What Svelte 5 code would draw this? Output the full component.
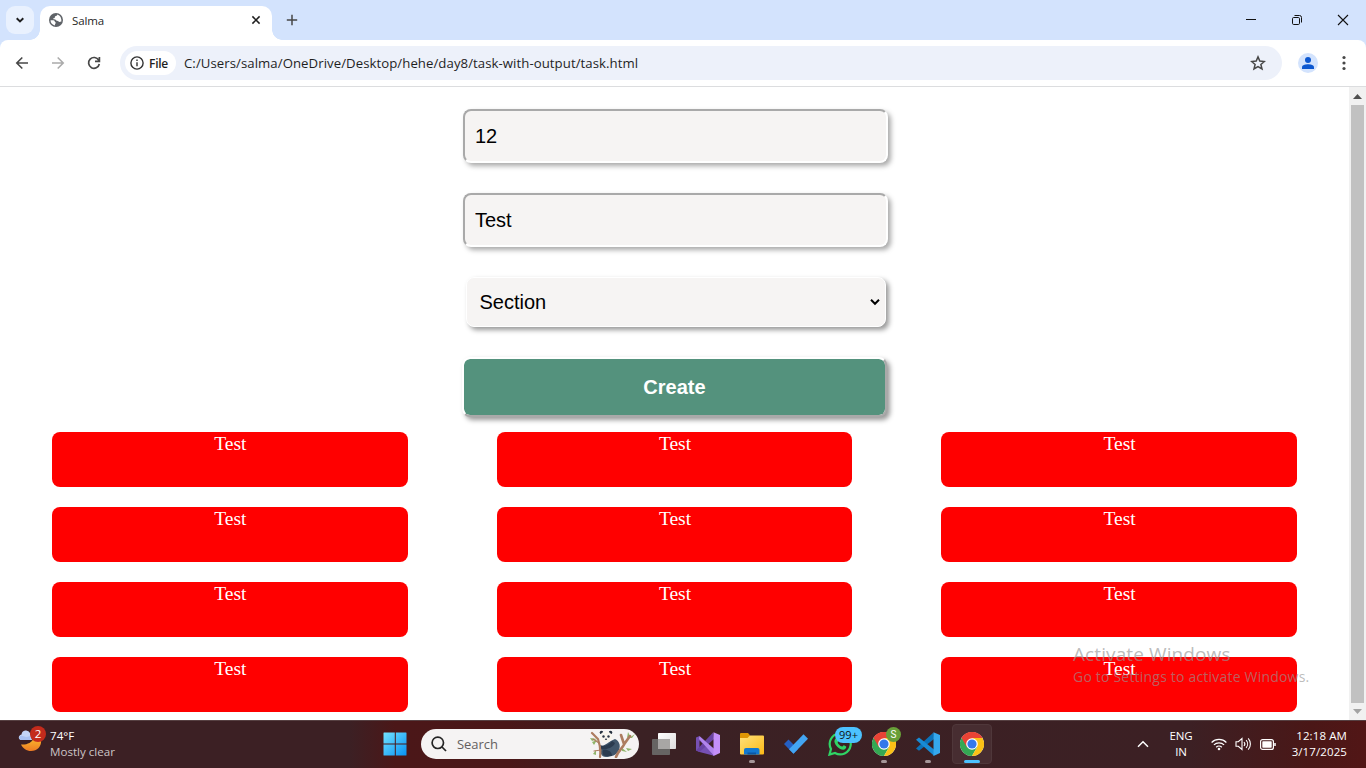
<script>
  const cards = Array.from({ length: 12 }, (_, i) => i);
</script>

{#snippet chrome()}
  <svg class="app-icon" viewBox="0 0 24 24">
    <circle cx="12" cy="12" r="12" fill="#fff" />
    <path d="M12 12 1.6 6A12 12 0 0 1 22.4 6Z" fill="#e94335" />
    <path d="M1.6 6A12 12 0 0 0 12 24L17.2 15 12 12Z" fill="#34a853" />
    <path d="M22.4 6A12 12 0 0 1 12 24L17.2 15 12 6Z" fill="#fbc116" />
    <path d="M12 6H22.4A12 12 0 0 0 1.6 6L6.8 15 12 12Z" fill="#e94335" />
    <circle cx="12" cy="12" r="5.8" fill="#fff" />
    <circle cx="12" cy="12" r="4.6" fill="#3478ea" />
  </svg>
{/snippet}

<div class="screen">
  <div class="tabs">
    <div class="tab-search">
      <svg width="10" height="8" viewBox="0 0 10 8"><path d="m1.7 2.2 3.3 3.2 3.3-3.2" fill="none" stroke="#1f1f1f" stroke-width="1.9" /></svg>
    </div>
    <div class="tab">
      <svg width="14" height="14" viewBox="0 0 14 14">
        <circle cx="7" cy="7" r="7" fill="#5f6368" />
        <path d="M8.300 1.500c0 1.200-1.200 1.300-2 1.700-.7.400-.1 1.200-.8 1.700-.6.400-1.300.2-1.300.9 0 .6.800.6 1.700.6 1.400 0 1.300 1.300 2.200 1.400 1 .1 1.500.7 2 1.200l2.300-.4C12.700 5.200 11.300 2.300 8.300 1.500ZM1.500 7.200h2.800c1.400 0 1.600 1.200 1.600 1.900 1.200.2 1 1.200.3 1.900-.4.400-.2.900-.1 1.400C3.500 12 1.500 10 1.500 7.200Z" fill="#fff" />
      </svg>
      <span class="tab-title">Salma</span>
      <svg width="10" height="10" viewBox="0 0 10 10"><path d="m1.400 1.400 7.200 7.200m0-7.200-7.200 7.200" stroke="#1f1f1f" stroke-width="1.500" /></svg>
    </div>
    <svg class="plus" width="12" height="12" viewBox="0 0 12 12"><path d="M6 .8v10.400M.8 6h10.400" stroke="#474747" stroke-width="1.500" /></svg>
    <div class="window-controls">
      <svg width="12" height="12" viewBox="0 0 12 12"><path d="M1 5.500h10" stroke="#111" /></svg>
      <svg width="12" height="12" viewBox="0 0 12 12" fill="none" stroke="#111"><rect x="1.500" y="3.500" width="7" height="7" rx="1.200" /><path d="M3.500 1.500h5a2 2 0 0 1 2 2v5" /></svg>
      <svg width="12" height="12" viewBox="0 0 12 12"><path d="m1 1 10 10m0-10L1 11" stroke="#111" stroke-width="1.100" /></svg>
    </div>
  </div>

  <div class="toolbar-wrap">
    <div class="toolbar">
      <svg width="14" height="14" viewBox="0 0 14 14" fill="none" stroke="#474747" stroke-width="1.600"><path d="M13 7H2m5.300-5.500L1.800 7l5.500 5.500" /></svg>
      <svg width="14" height="14" viewBox="0 0 14 14" fill="none" stroke="#ababab" stroke-width="1.600"><path d="M1 7h11M6.700 1.500 12.200 7l-5.500 5.500" /></svg>
      <svg width="14" height="14" viewBox="0 0 14 14" fill="none" stroke="#474747" stroke-width="1.700"><path d="M11.700 4.200A5.400 5.400 0 1 0 12.300 8M12.400 1v4.300H8" /></svg>
      <div class="omnibox">
        <div class="chip">
          <svg width="14" height="14" viewBox="0 0 14 14"><circle cx="7" cy="7" r="6.100" fill="none" stroke="#333" stroke-width="1.400" /><path d="M7 6.300v4M7 3.500v1.400" stroke="#333" stroke-width="1.400" /></svg>
          <span>File</span>
        </div>
        <span class="url">C:/Users/salma/OneDrive/Desktop/hehe/day8/task-with-output/task.html</span>
        <svg width="16" height="16" viewBox="0 0 16 16"><path d="m8 1.900 1.800 4.200 4.600.4-3.500 3 1.100 4.500L8 11.600 4 14l1.100-4.500-3.500-3 4.600-.4Z" fill="none" stroke="#474747" stroke-width="1.500" /></svg>
      </div>
      <div class="avatar">
        <svg width="14" height="14" viewBox="0 0 14 14" fill="#0b57d0"><circle cx="7" cy="4" r="3" /><path d="M1 13v-1.700C1 9 4.500 8.300 7 8.300s6 .7 6 3V13Z" /></svg>
      </div>
      <svg width="4" height="16" viewBox="0 0 4 16" fill="#474747"><circle cx="2" cy="2.500" r="1.600" /><circle cx="2" cy="8" r="1.600" /><circle cx="2" cy="13.500" r="1.600" /></svg>
    </div>
  </div>

  <div class="viewport">
    <main>
      <form>
        <input value="12" />
        <input value="Test" />
        <div class="select">
          <span>Section</span>
          <svg width="10" height="8" viewBox="0 0 10 8"><path d="m1 1.800 4 4 4-4" fill="none" stroke="#000" stroke-width="2" /></svg>
        </div>
        <button type="button">Create</button>
      </form>
      <div class="cards">
        {#each cards as card (card)}
          <section>Test</section>
        {/each}
      </div>
    </main>
    <div class="scrollbar">
      <svg width="9" height="5" viewBox="0 0 9 5"><path d="M0 5 4.500 0 9 5Z" fill="#505050" /></svg>
      <div class="thumb"></div>
      <svg width="9" height="5" viewBox="0 0 9 5"><path d="M0 0 4.500 5 9 0Z" fill="#a3a3a3" /></svg>
    </div>
  </div>

  <div class="taskbar">
    <div class="weather">
      <div class="weather-icon">
        <svg width="28" height="28" viewBox="0 0 28 28">
          <defs><linearGradient id="moon" x2="0" y2="1"><stop offset="0" stop-color="#fbb72c" /><stop offset="1" stop-color="#ee7b24" /></linearGradient></defs>
          <path d="M3 18.500c6 .5 11-2 12.500-6l7.500 1c1 7-4 11.500-10 11.500-4.500 0-8-2.500-10-6.500Z" fill="url(#moon)" />
          <path d="M1 12.500a3 3 0 0 1 2.500-4 4.500 4.500 0 0 1 8.500-1.500L14 14H2.500Z" fill="#c3d4f7" />
          <path d="M1 12a2.500 2.500 0 0 1 3.500-2l4 1 4-1v4H3Q1.500 14 1 12Z" fill="#a9c1f2" />
        </svg>
        <b>2</b>
      </div>
      <div class="weather-text"><span>74°F</span><span class="dim">Mostly clear</span></div>
    </div>

    <div class="apps">
      <svg class="start" width="24" height="24" viewBox="0 0 24 24">
        <defs><linearGradient id="win" x2="1" y2="1"><stop offset="0" stop-color="#73e3ff" /><stop offset="1" stop-color="#0791f3" /></linearGradient></defs>
        <path d="M1 .5h10.800v11H.5V1Q.5.500 1 .5ZM12.800.500H23q.5 0 .5.500v10.500H12.800ZM.500 12.500h11.300v11H1q-.5 0-.5-.5ZM12.800 12.500h10.700V23q0 .5-.5.500H12.800Z" fill="url(#win)" />
      </svg>
      <div class="search">
        <svg width="16" height="16" viewBox="0 0 16 16" fill="none" stroke="#252525" stroke-width="1.700"><circle cx="6.800" cy="6.800" r="5.700" /><path d="m11 11 4 4" /></svg>
        <span>Search</span>
        <svg class="panda" width="46" height="28" viewBox="0 0 46 28">
          <path d="m1 8 7 1-5 2ZM3 12l5-2-3 5ZM4 24l3-4v5ZM38 8l1-6 2 4ZM40 8l6-4-3 4ZM37 18l6 1-4 2ZM33 18l5 4-5-1Z" fill="#8fb56a" />
          <path d="M11 17c5-1 9-6 15-8 4 2 6 6 4 11-2 5-8 7-13 7s-6-5-6-10Z" fill="#41566b" />
          <path d="M11 15c4 2 9 0 12-4l3 2c-2 5-9 7-14 6Z" fill="#2b3b4f" />
          <path d="M14 20c4-1 9 1 9 6h-6c-3 0-4-3-3-6Z" fill="#2b3b4f" />
          <g fill="none" stroke="#ad7c60" stroke-linecap="round">
            <path d="M27 27C29 21 33 19 36 13L41 6M35 14 32 5" stroke-width="2.600" />
            <path d="M11 27C12 20 11 15 9 9L3 3" stroke-width="2.200" />
            <path d="m12 20-7 1M10 13 4 9" stroke-width="1.200" />
          </g>
          <circle cx="12.500" cy="2.500" r="1.800" fill="#26303e" /><circle cx="21.500" cy="2.500" r="1.800" fill="#26303e" />
          <ellipse cx="17" cy="6.800" rx="6" ry="5.500" fill="#f8f4ec" />
          <ellipse cx="14.500" cy="6.500" rx="1.200" ry="1.300" fill="#2b3544" /><ellipse cx="19.500" cy="6.500" rx="1.200" ry="1.300" fill="#2b3544" /><ellipse cx="17" cy="9.200" rx="1.100" ry=".7" fill="#2b3544" />
        </svg>
      </div>
      <div class="app">
        <svg class="app-icon" viewBox="0 0 24 24">
          <defs><linearGradient id="pane" x2="1" y2="1"><stop offset="0" stop-color="#fff" /><stop offset="1" stop-color="#dcdcdc" /></linearGradient></defs>
          <rect x="6" y="1" width="18" height="16" rx=".8" fill="url(#pane)" /><rect y="7" width="18" height="16" rx=".8" fill="#666463" /><path d="M6 7h12v10H6Z" fill="#a8a6a5" />
        </svg>
      </div>
      <div class="app">
        <svg class="app-icon" viewBox="0 0 24 24">
          <path d="M0 5.500 3.500 4 18 17v6.800L3.500 20 0 18.500Z" fill="#7650b3" /><path d="M3.500 8.500v7L7 12Z" fill="#3c2024" />
          <path d="M0 18.500 17 .5 18 7 3.500 20Z" fill="#6943a3" />
          <path d="M3.500 4.200 18 16.800v7L3 7Z" fill="#b184ec" />
          <path d="M17.500.200 24 3v18l-6.500 3Z" fill="#c48ff9" />
        </svg>
      </div>
      <div class="app running">
        <svg class="app-icon" viewBox="0 0 24 24">
          <defs><linearGradient id="folder" x2="1" y2="1"><stop offset="0" stop-color="#ffe17b" /><stop offset="1" stop-color="#fcb916" /></linearGradient></defs>
          <path d="M0 2q0-1 1-1h7l2 2.300V8H0Z" fill="#dd9504" /><path d="M0 6h7.500L10 3.500h13q1 0 1 1v17q0 1-1 1H1q-1 0-1-1Z" fill="url(#folder)" />
          <path d="M4 22.500V18q0-2 2-2h11.500q2 0 2 2v4.500Z" fill="#1278cf" /><path d="M7.500 20.500h8.500v2H7.500Z" fill="#0a57a3" />
        </svg>
      </div>
      <div class="app">
        <svg class="app-icon" viewBox="0 0 24 24"><path d="M0 12 4.500 7.500 14 17l-4.500 4.800Z" fill="#245fc3" /><path d="m5 17.200 14.500-15L24 6.700 9.500 21.800Z" fill="#43a5f2" /></svg>
      </div>
      <div class="app">
        <svg class="app-icon" viewBox="0 0 24 24">
          <path d="m1.500 22.600 1.500-5.700a10.500 10.500 0 1 1 4 4.100Z" fill="none" stroke="#2fd565" stroke-width="2.200" />
          <path d="M7.500 6.500c1-1 1.800-.5 2.200.5l.8 2c0 .8-.9 1.200-.9 1.800 1 1.900 2.300 3 4.400 3.800.7 0 1.200-1.400 1.900-1.400l2.300 1.200c.4 1.900-1.500 3.300-3 3.300-4-.3-8.200-4.400-8.800-8 0-1 .3-2.300 1.100-3.200Z" fill="#2fd565" />
        </svg>
        <span class="badge count">99+</span>
      </div>
      <div class="app running">{@render chrome()}<span class="badge profile">S</span></div>
      <div class="app running">
        <svg class="app-icon" viewBox="0 0 24 24"><path d="m0 16.500 17.500-16L18 7 3 18.700Z" fill="#0b72b9" /><path d="m0 7.700 3-2.200L18 17.500v6.300Z" fill="#188bd5" /><path d="M17.500.300 24 3v18l-6.500 2.900Z" fill="#35a8ed" /></svg>
      </div>
      <div class="app running active">{@render chrome()}</div>
    </div>

    <div class="tray">
      <svg width="12" height="8" viewBox="0 0 12 8"><path d="m1 6.800 5-5 5 5" fill="none" stroke="#fff" stroke-width="1.500" /></svg>
      <div class="lang"><span>ENG</span><span>IN</span></div>
      <svg width="16" height="14" viewBox="0 0 16 14" fill="none" stroke="#fff" stroke-width="1.200"><path d="M.6 5.500a10.500 10.500 0 0 1 14.800 0M2.900 7.900a7.200 7.200 0 0 1 10.200 0M5.200 10.200a4 4 0 0 1 5.600 0" /><circle cx="8" cy="12" r="1.300" fill="#fff" stroke="none" /></svg>
      <svg class="volume" width="17" height="14" viewBox="0 0 17 14" fill="none" stroke="#fff" stroke-width="1.100"><path d="M1 4.700h2.300L7 1.500v11L3.300 9.300H1ZM9 5a3 3 0 0 1 0 4M11.100 3.200a5.600 5.600 0 0 1 0 7.600M13.200 1.300a8.500 8.500 0 0 1 0 11.400" /></svg>
      <svg class="battery" width="16" height="11" viewBox="0 0 16 11"><rect x=".6" y=".6" width="12.800" height="9.800" rx="2" fill="none" stroke="#fff" stroke-width="1.200" /><rect x="2.300" y="2.300" width="9.400" height="6.400" rx=".6" fill="#fff" /><path d="M15 4v3" stroke="#fff" stroke-width="1.500" /></svg>
      <div class="clock"><span>12:18 AM</span><span>3/17/2025</span></div>
    </div>
  </div>

  <div class="watermark"><span class="wm-title">Activate Windows</span><span class="wm-text">Go to Settings to activate Windows.</span></div>
</div>

<style>
  :global(body) { overflow: hidden; background: #fff; }
  .screen { position: relative; width: 1366px; height: 768px; display: flex; flex-direction: column; font-family: "Open Sans", "Noto Sans", sans-serif; font-size: 12px; color: #1f1f1f; white-space: nowrap; overflow: hidden; }
  .screen * { box-sizing: border-box; }
  svg { display: block; flex: none; }

  .tabs { height: 40px; flex: none; background: #d3e3fd; display: flex; align-items: center; padding-left: 6px; }
  .tab-search { width: 28px; height: 28px; border-radius: 9px; background: #e9f1fe; display: grid; place-items: center; }
  .tab { position: relative; width: 232px; height: 34px; margin: 6px 0 0 6px; padding: 0 11px 6px 9px; background: #fff; border-radius: 10px 10px 0 0; display: flex; align-items: center; }
  .tab::before, .tab::after { content: ""; position: absolute; bottom: 0; width: 10px; height: 10px; }
  .tab::before { left: -10px; background: radial-gradient(circle at 0 0, transparent 9.5px, #fff 10px); }
  .tab::after { right: -10px; background: radial-gradient(circle at 100% 0, transparent 9.5px, #fff 10px); }
  .tab-title { flex: 1; margin-left: 9px; font-size: 11.500px; letter-spacing: -.1px; }
  .plus { margin-left: 14px; }
  .window-controls { margin-left: auto; display: flex; gap: 34px; padding-right: 17px; }

  .toolbar-wrap { flex: none; background: #d3e3fd; }
  .toolbar { height: 47px; background: #fff; border-bottom: 1px solid #dcdddf; border-radius: 8px 8px 0 0; display: flex; align-items: center; padding: 0 20px 0 15px; gap: 22px; }
  .omnibox { flex: 1; height: 34px; margin: 0 -5px 0 -3px; border-radius: 17px; background: #edf1fa; display: flex; align-items: center; padding: 0 16px 0 5px; }
  .chip { width: 51px; height: 24px; border-radius: 12px; background: #fff; display: flex; align-items: center; gap: 5px; padding-left: 5px; font-size: 12px; font-weight: 600; letter-spacing: -.25px; }
  .url { flex: 1; margin-left: 8px; font-size: 13.200px; letter-spacing: .06px; }
  .avatar { width: 20px; height: 20px; margin-right: 1px; border-radius: 50%; background: #d3e3fd; display: grid; place-items: center; }
  .avatar + svg { margin-left: 0; }
  .omnibox + .avatar { margin-left: -1px; margin-right: 2px; }

  .viewport { height: 633px; flex: none; display: flex; }
  main { flex: 1; padding: 22px 52px 0; overflow: hidden; }
  form { display: flex; flex-direction: column; align-items: center; padding-left: 2px; }
  input, .select, button { font-family: "Liberation Sans", Arial, sans-serif; font-size: 20px; border-radius: 8px; color: #000; }
  input { width: 425px; height: 54px; margin-bottom: 30px; padding: 0 10px; border: 2px solid; border-color: #a9a9a9 #fff #fff #a9a9a9; background: #f6f4f3; box-shadow: 3px 3px 5px #aaa; }
  .select { width: 420px; height: 50px; background: #f6f4f3; border: 1px solid #fff; box-shadow: 3px 3px 5px #999; display: flex; align-items: center; justify-content: space-between; padding: 0 5px 0 13px; }
  button { width: 425px; height: 60px; margin: 30px 2px 0 0; padding: 0; border: 2px solid; border-color: #fff #a9a9a9 #a9a9a9 #fff; background: #54927d; background-clip: padding-box; box-shadow: 3px 3px 5px #999; color: #fff; font-weight: bold; }
  .cards { margin-top: 15px; display: grid; grid-template-columns: repeat(3, 1fr); column-gap: 89px; row-gap: 20px; }
  section { height: 55px; padding-left: 1px; border-radius: 8px; background: red; color: #fff; text-align: center; font: 19.500px/24px "Liberation Serif", "Times New Roman", serif; }
  .scrollbar { width: 17px; background: #f1f1f1; display: flex; flex-direction: column; align-items: center; padding: 7px 0 6px; }
  .thumb { width: 13px; flex: 1; margin: 6px 0; background: #c1c1c1; }

  .taskbar { height: 48px; flex: none; display: flex; align-items: center; padding-bottom: 1px; color: #fff; border-top: 1px solid #564042; background: linear-gradient(90deg, #3c2024 0, #3c2024 350px, #4b1718 395px, #4a1718 510px, #3b2124 630px, #3c2024 1190px, #4a1717 1310px, #521616 100%); }
  .weather { width: 383px; height: 46px; display: flex; padding: 6px 0 0 18px; }
  .weather-icon { position: relative; width: 32px; margin-top: -1px; }
  .weather-icon b { position: absolute; left: 12px; top: 0; width: 16px; height: 16px; border-radius: 50%; background: #c42b1c; font: 11.500px/16px "Open Sans", sans-serif; text-align: center; }
  .weather-text { display: flex; flex-direction: column; font-size: 11.600px; line-height: 16px; padding-top: 1px; }
  .dim { color: #cdc5c6; }
  .apps { display: flex; align-items: center; }
  .start { margin-right: 14px; }
  .search { width: 218px; height: 30px; margin-right: 5px; border-radius: 15px; background: #f5f3f3; display: flex; align-items: center; padding-left: 10px; color: #646060; font-size: 13px; }
  .search span { margin-left: 10px; flex: 1; letter-spacing: -.05px; }
  .panda { margin-right: 4px; }
  .app { position: relative; width: 40px; height: 40px; margin-right: 4px; display: grid; place-items: center; border-radius: 4px; }
  .app-icon { width: 24px; height: 24px; }
  .running::after { content: ""; position: absolute; left: 17px; bottom: 1px; width: 6px; height: 3px; border-radius: 2px; background: #a69799; }
  .active { background: #472d31; border: 1px solid #4f373a; }
  .active::after { left: 11px; bottom: 0; width: 16px; background: #4cc2ff; }
  .badge { position: absolute; text-align: center; }
  .count { left: 15px; top: 3px; width: 27px; height: 16px; border-radius: 8px; background: #4cc2ff; color: #111; font-size: 11px; line-height: 16px; }
  .profile { left: 22px; top: 3px; width: 15px; height: 15px; border-radius: 50%; background: #689f38; font: 10px/15px Roboto, sans-serif; }
  .tray { margin-left: auto; display: flex; align-items: center; padding-right: 19px; font-size: 11.500px; line-height: 16px; }
  .lang, .clock { display: flex; flex-direction: column; }
  .lang { width: 26px; margin: 0 17px 0 19px; align-items: center; letter-spacing: -.1px; }
  .volume { margin-left: 8px; }
  .battery { margin-left: 8px; }
  .clock { width: 71px; align-items: flex-end; letter-spacing: .1px; }
  .watermark { position: absolute; left: 1073px; top: 641px; display: flex; flex-direction: column; color: rgba(150, 150, 150, .65); }
  .wm-title { font-size: 19px; line-height: 26px; letter-spacing: .1px; }
  .wm-text { font-size: 14px; line-height: 20px; letter-spacing: .2px; }
</style>
